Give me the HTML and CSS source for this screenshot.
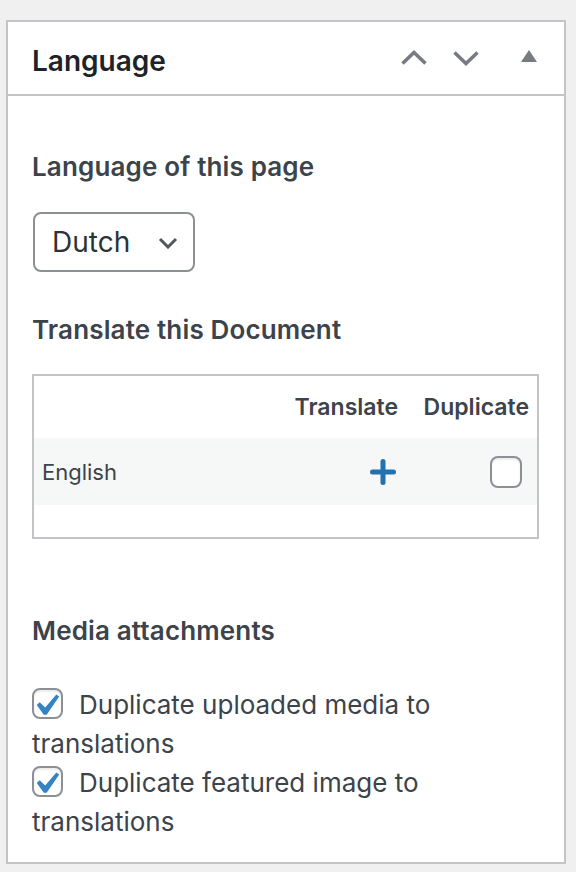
FILE: index.html
```html
<!DOCTYPE html>
<html lang="en">
<head>
<meta charset="utf-8">
<title>Language</title>
<link rel="stylesheet" href="styles.css">
</head>
<body>
<div class="postbox">
  <div class="postbox-header">
    <h2 class="hndle">Language</h2>
    <div class="handle-actions">
      <button class="handle-btn" aria-label="Move up">
        <svg width="28" height="16" viewBox="0 0 28 16"><polyline points="2.5,13.5 14,2.5 25.5,13.5" fill="none" stroke="#787c82" stroke-width="3.6"/></svg>
      </button>
      <button class="handle-btn" aria-label="Move down">
        <svg width="28" height="16" viewBox="0 0 28 16"><polyline points="2.5,2.5 14,13.5 25.5,2.5" fill="none" stroke="#787c82" stroke-width="3.6"/></svg>
      </button>
      <button class="handle-btn toggle" aria-label="Toggle panel">
        <svg width="16" height="12" viewBox="0 0 16 12"><polygon points="8,0 16,12 0,12" fill="#787c82"/></svg>
      </button>
    </div>
  </div>
  <div class="inside">
    <h4 class="section-title first">Language of this page</h4>
    <div class="select">
      <span class="select-value">Dutch</span>
      <svg class="select-arrow" width="20" height="12" viewBox="0 0 20 12"><polyline points="2,2 10,10 18,2" fill="none" stroke="#50575e" stroke-width="3"/></svg>
    </div>
    <h4 class="section-title">Translate this Document</h4>
    <table class="translations">
      <thead>
        <tr>
          <th class="col-lang"></th>
          <th class="col-translate">Translate</th>
          <th class="col-duplicate">Duplicate</th>
        </tr>
      </thead>
      <tbody>
        <tr class="row-alt">
          <td class="col-lang">English</td>
          <td class="col-translate">
            <svg class="plus" width="26" height="26" viewBox="0 0 26 26"><line x1="13" y1="2.5" x2="13" y2="23.5" stroke="#2271b1" stroke-width="5" stroke-linecap="round"/><line x1="2.5" y1="13" x2="23.5" y2="13" stroke="#2271b1" stroke-width="5" stroke-linecap="round"/></svg>
          </td>
          <td class="col-duplicate"><span class="checkbox"></span></td>
        </tr>
        <tr class="row-empty"><td colspan="3"></td></tr>
      </tbody>
    </table>
    <h4 class="section-title media">Media attachments</h4>
    <div class="options">
      <label class="option"><span class="checkbox checked"><svg width="28" height="28" viewBox="4.5 3 12.5 12.5"><path d="M14.83 4.89l1.34.94-5.81 8.38H9.02L5.78 9.67l1.34-1.25 2.57 2.4z" fill="#3582c4"/></svg></span>Duplicate uploaded media to translations</label>
      <label class="option"><span class="checkbox checked"><svg width="28" height="28" viewBox="4.5 3 12.5 12.5"><path d="M14.83 4.89l1.34.94-5.81 8.38H9.02L5.78 9.67l1.34-1.25 2.57 2.4z" fill="#3582c4"/></svg></span>Duplicate featured image to translations</label>
    </div>
  </div>
</div>
</body>
</html>
```

FILE: styles.css
```css
* { box-sizing: border-box; }

html, body {
  margin: 0;
  padding: 0;
}

body {
  background: #f0f0f1;
  font-family: Inter, "Noto Sans", "Liberation Sans", sans-serif;
  color: #3c434a;
  padding: 20px 0 0 6px;
  width: 576px;
  height: 872px;
  overflow: hidden;
}

.postbox {
  width: 560px;
  background: #fff;
  border: 2px solid #c3c4c7;
}

.postbox-header {
  height: 74px;
  border-bottom: 2px solid #c3c4c7;
  display: flex;
  align-items: center;
  justify-content: space-between;
  padding: 0 0 0 24px;
}

.hndle {
  margin: 0;
  font-size: 28px;
  font-weight: 600;
  color: #1d2327;
  letter-spacing: 0;
  line-height: 40px;
  padding-top: 5px;
}

.handle-actions {
  display: flex;
  align-items: center;
  height: 100%;
  padding-right: 27px;
}

.handle-btn {
  background: none;
  border: 0;
  padding: 0;
  margin: 0;
  display: flex;
  align-items: center;
  justify-content: center;
  width: 52px;
  height: 72px;
  cursor: pointer;
}

.handle-btn svg { display: block; margin-top: -1px; }

.handle-btn.toggle { width: 45px; justify-content: flex-end; }
.handle-btn.toggle svg { margin-top: -5px; }

.inside {
  padding: 51px 24px 21px 24px;
}

.section-title {
  margin: 0;
  font-size: 26px;
  font-weight: 600;
  line-height: 40px;
  color: #3c434a;
  letter-spacing: 0.15px;
}

.section-title.first { margin-bottom: 25px; }

.select {
  width: 162px;
  height: 60px;
  border: 2px solid #8c8f94;
  border-radius: 8px;
  display: flex;
  align-items: center;
  justify-content: space-between;
  padding: 0 15px 0 17px;
  margin: 0 0 38px 1px;
}

.select-value {
  font-size: 28px;
  color: #2c3338;
  line-height: 1;
}

.select-arrow { display: block; margin-top: 2px; }

.translations {
  width: 507px;
  border: 2px solid #c3c4c7;
  border-collapse: separate;
  border-spacing: 0;
  margin: 24px 0 72px 0;
}

.translations th {
  height: 62px;
  font-size: 23px;
  font-weight: 600;
  color: #3c434a;
  text-align: right;
  padding: 0;
  vertical-align: middle;
}

.translations th.col-translate { padding-right: 12px; }
.translations th.col-duplicate { width: 127px; padding-right: 8px; }

.row-alt td {
  background: #f6f7f7;
  height: 67px;
  vertical-align: middle;
  padding: 0;
}

.row-alt td.col-lang {
  font-size: 22px;
  padding-left: 8px;
  color: #3c434a;
}

.row-alt td.col-translate { text-align: right; padding-right: 14px; }
.row-alt td.col-duplicate { text-align: right; padding-right: 15px; }

.plus { display: inline-block; vertical-align: middle; }

.row-empty td { height: 32px; padding: 0; }

.checkbox {
  display: inline-flex;
  align-items: center;
  justify-content: center;
  width: 32px;
  height: 32px;
  border: 2px solid #8c8f94;
  border-radius: 8px;
  background: #fff;
  box-shadow: inset 0 2px 2px rgba(0, 0, 0, 0.08);
  vertical-align: middle;
}

.section-title.media { margin-bottom: 34px; }

.options { display: flex; flex-direction: column; }

.option {
  font-size: 26px;
  line-height: 39px;
  color: #3c434a;
  display: block;
}

.option .checkbox {
  width: 31px;
  height: 31px;
  margin-right: 16px;
  margin-top: -6px;
}

.option .checkbox svg { display: block; }
```
